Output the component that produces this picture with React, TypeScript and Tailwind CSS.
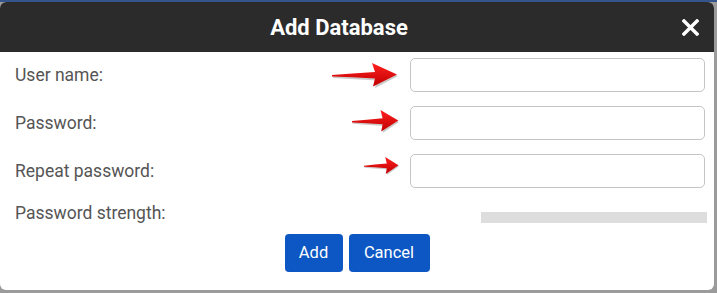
import { FC } from 'react';

const fields = ['User name:', 'Password:', 'Repeat password:'];

// red annotation arrows: [left, top, width, height] relative to each row
const arrows = [
  { left: 332, top: 5, w: 66, h: 25 },
  { left: 352, top: 4, w: 47, h: 23 },
  { left: 364, top: 3, w: 35, h: 18 },
];

const Arrow: FC<{ left: number; top: number; w: number; h: number }> = ({ left, top, w, h }) => (
  <svg
    className="absolute pointer-events-none"
    style={{ left, top }}
    width={w}
    height={h}
    viewBox="0 0 66 25"
    preserveAspectRatio="none"
  >
    <defs>
      <linearGradient id="red" x1="0" y1="0" x2="0" y2="1">
        <stop offset="0" stopColor="#ff2020" />
        <stop offset="1" stopColor="#c00000" />
      </linearGradient>
    </defs>
    <path d="M1 13.5 L44 11 L42 2 L66 13 L43 25 L45 17.5 L1 15 Z" fill="#8a8a8a" opacity="0.45" />
    <path d="M0 12 Q20 10.5 43 9 L40 0 L65 11.5 L41 23.5 L43 15.5 Q20 14 0 13.5 Z" fill="url(#red)" />
  </svg>
);

const App: FC = () => {
  return (
    <div className="w-[717px] h-[293px] bg-[#9b9b9b] border-t-2 border-[#34558c] font-['Roboto',sans-serif]">
      <div className="w-[714px] h-[288px] bg-white rounded-md overflow-hidden flex flex-col">
        <header className="h-[50px] bg-[#2b2b2b] relative flex items-center justify-center pr-[36px] shrink-0">
          <h1 className="text-white text-[22px] font-bold">Add Database</h1>
          <svg className="absolute left-[682px] top-[17px]" width="17" height="17" viewBox="0 0 17 17">
            <path d="M2 2 L15 15 M15 2 L2 15" stroke="#fff" strokeWidth="3.4" strokeLinecap="square" />
          </svg>
        </header>
        <div className="flex flex-col gap-[14px] pt-[6px]">
          {fields.map((label, i) => (
            <div key={label} className="relative flex items-center pl-[15px] pr-[9px]">
              <span className="text-[17.5px] text-[#555555]">{label}</span>
              <Arrow {...arrows[i]} />
              <input
                type={i === 0 ? 'text' : 'password'}
                className="ml-auto w-[295px] h-[34px] border border-[#c4c4c4] rounded-[5px] outline-none"
              />
            </div>
          ))}
        </div>
        <div className="flex items-start pl-[15px] pr-[7px] mt-[12px]">
          <span className="text-[17.5px] text-[#555555]">Password strength:</span>
          <div className="ml-auto mt-[12px] w-[226px] h-[11px] bg-[#dddddd]" />
        </div>
        <div className="flex justify-center gap-[6px] mt-[8px]">
          <button type="button" className="w-[58px] h-[38px] rounded bg-[#0c57c3] text-white text-[16.5px]">
            Add
          </button>
          <button type="button" className="w-[81px] h-[38px] rounded bg-[#0c57c3] text-white text-[16.5px]">
            Cancel
          </button>
        </div>
      </div>
    </div>
  );
};

export default App;
